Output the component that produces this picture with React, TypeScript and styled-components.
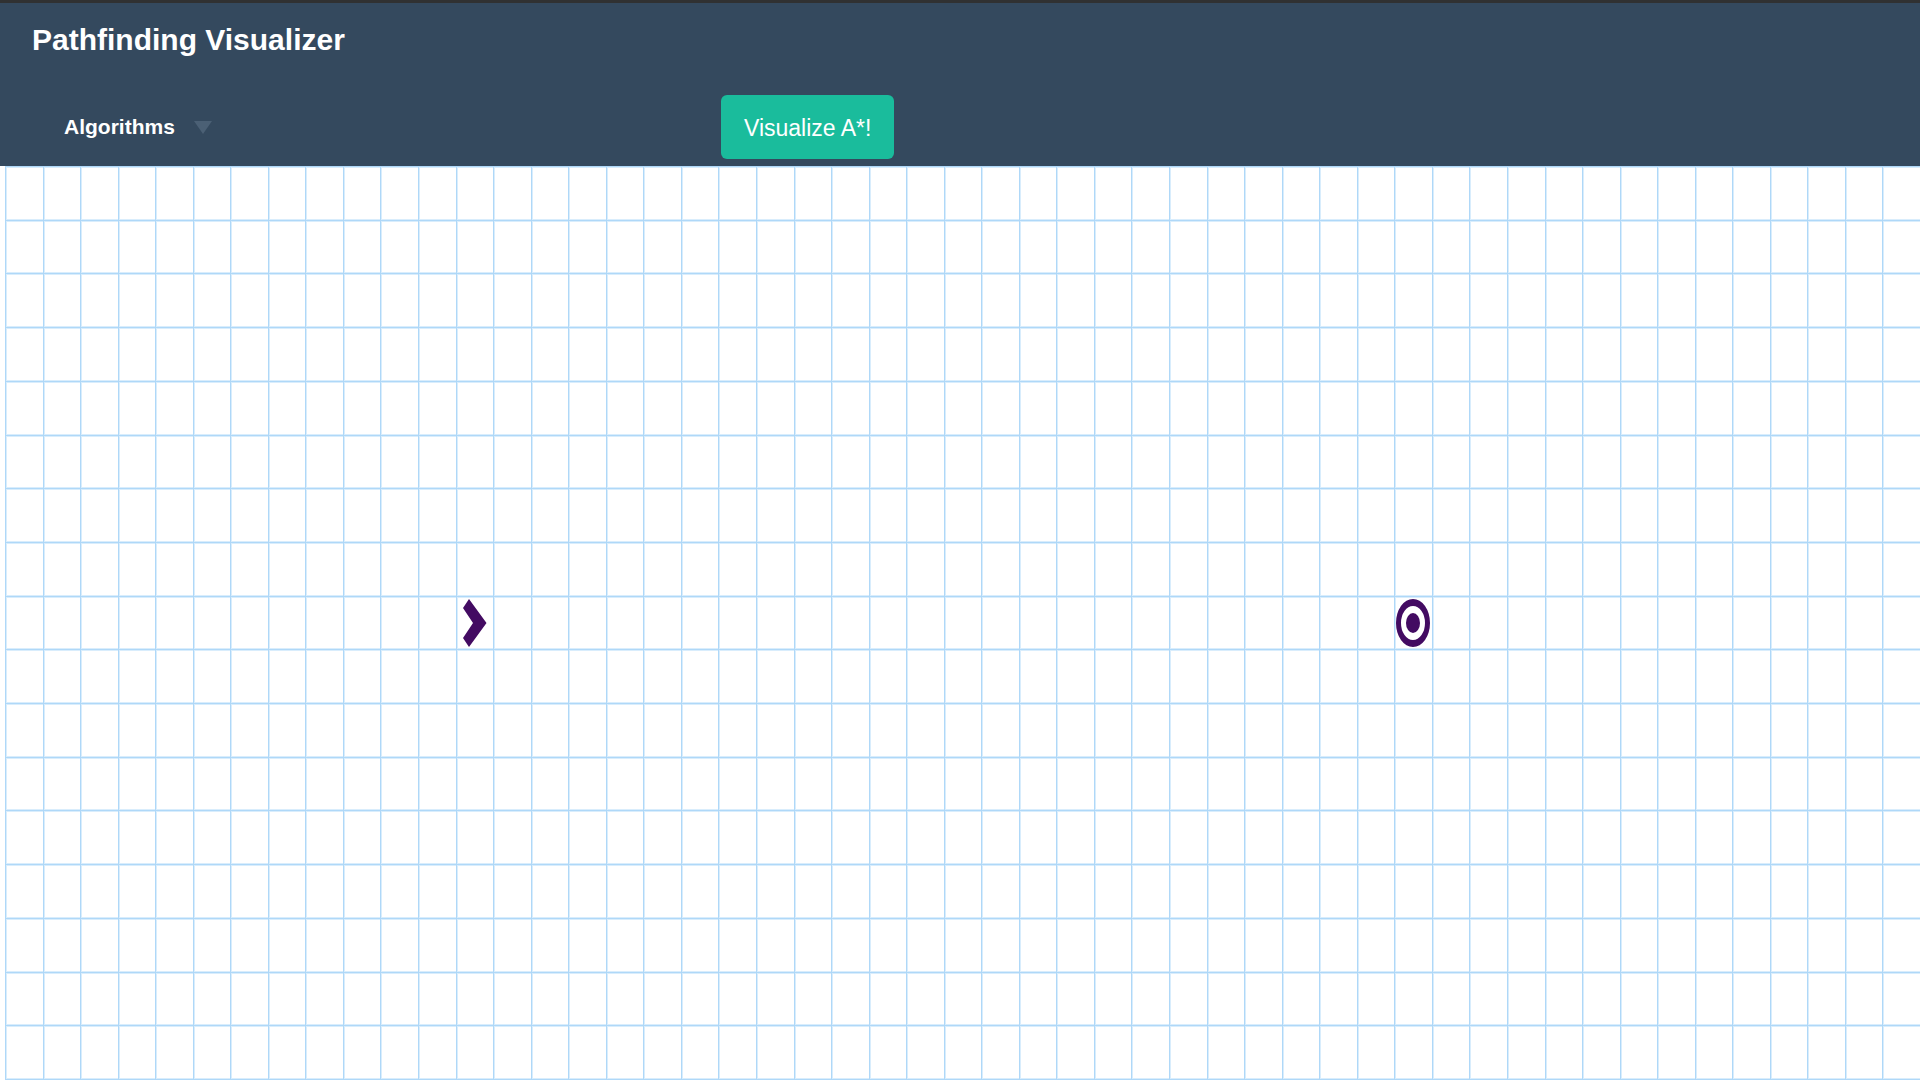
import React from "react";
import styled, { createGlobalStyle } from "styled-components";

const ROWS = 17;
const COLUMNS = 51;
const START = { row: 8, column: 12 };
const TARGET = { row: 8, column: 37 };

const GlobalStyle = createGlobalStyle`
  * {
    box-sizing: border-box;
  }

  body {
    margin: 0;
    background: #ffffff;
    font-family: "Liberation Sans", Arial, sans-serif;
  }
`;

const Page = styled.div`
  display: flex;
  flex-direction: column;
  min-height: 100vh;
`;

const Header = styled.header`
  border-top: 3px solid #303132;
  background: #34495e;
  color: #ffffff;
`;

const Title = styled.h1`
  margin: 0;
  padding: 21px 32px 0;
  font-size: 30px;
  line-height: 32px;
  font-weight: 700;
`;

const Nav = styled.nav`
  display: grid;
  grid-template-columns: 657px auto;
  align-items: center;
  justify-content: start;
  padding: 39px 64px 7px;
`;

const MenuButton = styled.button`
  display: flex;
  align-items: center;
  justify-self: start;
  gap: 19px;
  padding: 0;
  border: 0;
  background: none;
  color: inherit;
  font: 700 21px/24px "Liberation Sans", Arial, sans-serif;
  cursor: pointer;
`;

const Caret = styled.span`
  border: 9px solid transparent;
  border-top: 13px solid #4b6075;
  border-bottom: 0;
`;

const VisualizeButton = styled.button`
  padding: 21px 23px 19px;
  border: 0;
  border-radius: 6px;
  background: #1abc9c;
  color: #ffffff;
  font: 400 23px/24px "Liberation Sans", Arial, sans-serif;
  cursor: pointer;
`;

const Board = styled.main`
  flex: 1;
  display: grid;
  grid-template-columns: repeat(${COLUMNS}, minmax(0, 1fr));
  grid-template-rows: repeat(${ROWS}, minmax(0, 1fr));
  margin-left: 5px;
  border-bottom: 1px solid #afd8f8;
`;

const Cell = styled.div`
  display: flex;
  align-items: center;
  justify-content: center;
  border-top: 1px solid #afd8f8;
  border-left: 1px solid #afd8f8;
  box-shadow: inset 1px 1px #d9edfc, inset 0 -1px #d9edfc;
`;

const NodeIcon = styled.svg`
  width: 36px;
  height: 52px;
  fill: #430b62;
`;

function StartIcon() {
  return (
    <NodeIcon viewBox="0 0 36 52" role="img" aria-label="Start node">
      <path d="M12 2 L29.500 26 L12 50 L6 41 L16 26 L6 11 Z" />
    </NodeIcon>
  );
}

function TargetIcon() {
  return (
    <NodeIcon viewBox="0 0 36 52" role="img" aria-label="Target node">
      <path
        fillRule="evenodd"
        d="M17 2a17 24 0 1 0 0 48a17 24 0 1 0 0-48ZM17 9a12 17 0 1 1 0 34a12 17 0 1 1 0-34Z"
      />
      <ellipse cx="17" cy="26" rx="7" ry="10" />
    </NodeIcon>
  );
}

const cells = Array.from({ length: ROWS * COLUMNS }, (_, index) => ({
  row: Math.floor(index / COLUMNS),
  column: index % COLUMNS,
}));

export default function App() {
  return (
    <Page>
      <GlobalStyle />
      <Header>
        <Title>Pathfinding Visualizer</Title>
        <Nav>
          <MenuButton type="button" aria-haspopup="menu">
            Algorithms
            <Caret aria-hidden="true" />
          </MenuButton>
          <VisualizeButton type="button">Visualize A*!</VisualizeButton>
        </Nav>
      </Header>
      <Board>
        {cells.map(({ row, column }) => (
          <Cell key={`${row}-${column}`}>
            {row === START.row && column === START.column && <StartIcon />}
            {row === TARGET.row && column === TARGET.column && <TargetIcon />}
          </Cell>
        ))}
      </Board>
    </Page>
  );
}
